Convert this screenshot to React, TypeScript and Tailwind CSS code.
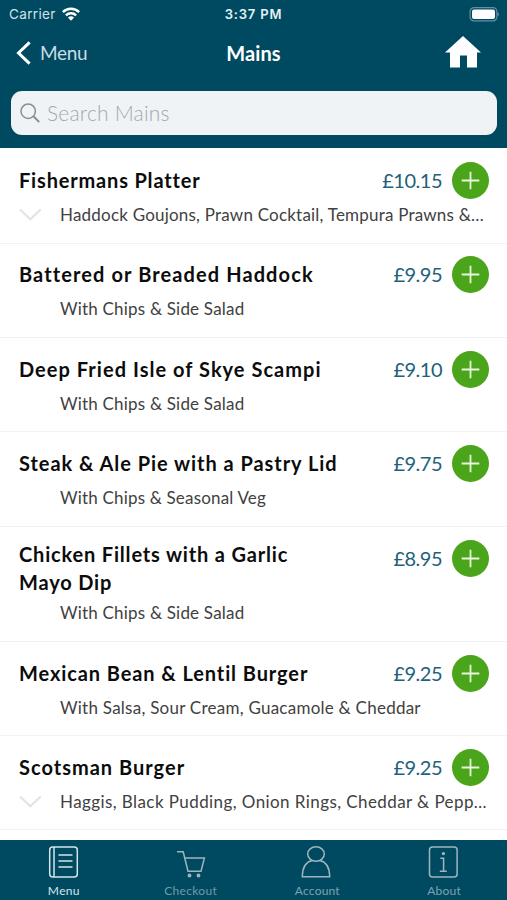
type Item = {
  name: string;
  nameClass: string;
  desc: string;
  descClass: string;
  price: string;
  height: string;
  more?: boolean;
};

const items: Item[] = [
  { name: "Fishermans Platter", nameClass: "tracking-[0.82px]", desc: "Haddock Goujons, Prawn Cocktail, Tempura Prawns &…", descClass: "tracking-[0.21px]", price: "£10.15", height: "h-[96px] pt-[14px]", more: true },
  { name: "Battered or Breaded Haddock", nameClass: "tracking-[1.1px]", desc: "With Chips & Side Salad", descClass: "tracking-[0.2px]", price: "£9.95", height: "h-[94px] pt-[12px]" },
  { name: "Deep Fried Isle of Skye Scampi", nameClass: "tracking-[1.03px]", desc: "With Chips & Side Salad", descClass: "tracking-[0.2px]", price: "£9.10", height: "h-[94px] pt-[13px]" },
  { name: "Steak & Ale Pie with a Pastry Lid", nameClass: "tracking-[0.95px]", desc: "With Chips & Seasonal Veg", descClass: "tracking-[0.18px]", price: "£9.75", height: "h-[95px] pt-[13px]" },
  { name: "Chicken Fillets with a Garlic\nMayo Dip", nameClass: "tracking-[0.82px]", desc: "With Chips & Side Salad", descClass: "tracking-[0.2px]", price: "£8.95", height: "h-[115px] pt-[13px]" },
  { name: "Mexican Bean & Lentil Burger", nameClass: "tracking-[0.9px]", desc: "With Salsa, Sour Cream, Guacamole & Cheddar", descClass: "tracking-[0.25px]", price: "£9.25", height: "h-[94px] pt-[13px]" },
  { name: "Scotsman Burger", nameClass: "tracking-[1px]", desc: "Haggis, Black Pudding, Onion Rings, Cheddar & Pepp…", descClass: "tracking-[0.42px]", price: "£9.25", height: "h-[94px] pt-[13px]", more: true },
];

function StatusBar() {
  return (
    <div className="grid h-[27px] grid-cols-3 items-center px-[9px] font-['Inter',sans-serif] text-[13px] leading-[27px]">
      <div className="flex items-center gap-[6px] text-[#d3e1e6]">
        <span className="pt-px text-[13.5px] tracking-[0.35px]">Carrier</span>
        <svg width="18" height="14" viewBox="0 0 18 14" fill="none" stroke="#fff" strokeWidth="2.5">
          <path d="M.9 5.1a11.6 11.6 0 0 1 16.2 0" />
          <path d="M3.9 8.3a7.3 7.3 0 0 1 10.2 0" />
          <path d="M9 13.8 5.9 10.6a4.5 4.5 0 0 1 6.2 0Z" fill="#fff" stroke="none" />
        </svg>
      </div>
      <span className="pt-px text-center font-semibold tracking-[0.8px] text-[#e6f1f4]">3:37 PM</span>
      <svg className="mr-[-1px] justify-self-end" width="31" height="15" viewBox="0 0 31 15">
        <g transform="translate(1.5)">
          <rect x=".6" y=".6" width="26.8" height="13.3" rx="4" fill="none" stroke="#65909f" strokeWidth="1.2" />
          <rect x="2.5" y="2.5" width="23" height="9.5" rx="2" fill="#fff" />
          <path d="M28 5v4.5q1.5-.7 1.5-2.25T28 5Z" fill="#65909f" />
        </g>
      </svg>
    </div>
  );
}

function Row({ item }: { item: Item }) {
  const two = item.name.includes("\n");
  return (
    <li className={`${item.height} shrink-0 border-b border-[#f1f2f2] pl-[19px] pr-[18px]`}>
      <div className={`${two ? "h-[62px]" : "h-[42px]"} flex items-start`}>
        <h2 className={`${item.nameClass} ${two ? "pt-0" : "pt-[4px]"} flex-1 whitespace-pre text-[20px] font-bold leading-[28px] text-[#0c0c0c]`}>{item.name}</h2>
        <span className="mr-[10px] text-[20px] leading-[36px] tracking-[-0.5px] text-[#23617a]">{item.price}</span>
        <button aria-label={`Add ${item.name}`} className="grid size-[37px] place-items-center rounded-full bg-[#4aa51b]">
          <svg width="19" height="19" viewBox="0 0 19 19" stroke="#eaf7df" strokeWidth="1.8"><path d="M9.5.7v17.6M.7 9.5h17.6" /></svg>
        </button>
      </div>
      <div className="flex h-[22px] items-center">
        <div className="w-[41px] shrink-0">
          {item.more && <svg width="23" height="14" viewBox="0 0 23 14" fill="none" stroke="#e3e3e3" strokeWidth="2.2"><path d="m1 1.5 10.3 9.8L21.7 1.5" /></svg>}
        </div>
        <p className={`${item.descClass} whitespace-nowrap text-[17px] leading-[22px] text-[#414141]`}>{item.desc}</p>
      </div>
    </li>
  );
}

const tabs = [
  {
    label: "Menu", color: "text-[#d2e6ec]", track: "tracking-[0.35px]",
    icon: <><rect x="2.7" y="1" width="27.6" height="30" rx="3" /><path d="M7 1v30M11.5 9h14M11.5 15h14M11.5 21h14" /></>,
  },
  {
    label: "Checkout", color: "text-[#7399a6]", track: "tracking-[0.3px]",
    icon: <><path d="M3 5.8h6.2l4.8 19.5h13l3.4-13.2H10.8" /><circle cx="15.5" cy="29.5" r="1.2" fill="currentColor" /><circle cx="24.5" cy="29.5" r="1.2" fill="currentColor" /></>,
  },
  {
    label: "Account", color: "text-[#7fa3af]", track: "tracking-[0.2px]",
    icon: <><ellipse cx="16" cy="8" rx="8.3" ry="7.2" /><path d="M12 14.5C5.5 16.2 2.3 22 2.3 30.8h27.4C29.7 22 26.5 16.2 20 14.5" /></>,
  },
  {
    label: "About", color: "text-[#7fa3af]", track: "tracking-[0.2px]",
    icon: <><rect x="2.5" y="1" width="27.6" height="30" rx="3" /><path d="M13.3 12.3h3.3v13M12.8 25.3h7" /><circle cx="16.4" cy="7.6" r=".9" fill="currentColor" /></>,
  },
];

export default function App() {
  return (
    <div className="flex h-[900px] w-[507px] flex-col overflow-hidden bg-white font-['Lato',sans-serif]">
      <header className="h-[148px] shrink-0 bg-[#004a61] text-white">
        <StatusBar />
        <div className="grid h-[64px] grid-cols-3 items-start pt-[8px]">
          <button className="flex h-[36px] items-center gap-[9px] pl-[16px] text-[#c9dce3]">
            <svg className="-mt-px" width="15" height="24" viewBox="0 0 15 24" fill="none" stroke="#fff" strokeWidth="3"><path d="M13.6 1.3 2.5 12l11.1 10.7" /></svg>
            <span className="pt-px text-[19px] tracking-[-0.3px]">Menu</span>
          </button>
          <h1 className="text-center text-[20px] font-bold leading-[36px] tracking-[0.1px]">Mains</h1>
          <svg className="mr-[26px] mt-px justify-self-end" width="36" height="32" viewBox="0 0 36 32" fill="#fff"><path d="M18 0 36 16.5h-4V31.5H22V19.5h-7v12H5v-15H0Z" /></svg>
        </div>
        <div className="ml-[11px] mr-[10px] flex h-[44px] items-center gap-[7px] rounded-[11px] bg-[#eff3f6] pl-[9px]">
          <svg width="20" height="20" viewBox="0 0 20 20" fill="none" stroke="#8a8e91" strokeWidth="1.5"><circle cx="8.2" cy="8.2" r="7.2" /><path d="m13.5 13.3 5.7 5.8" strokeWidth="2" /></svg>
          <span className="text-[21px] font-light tracking-[0.2px] text-[#a3a8ab]">Search Mains</span>
        </div>
      </header>
      <ul className="flex h-[692px] shrink-0 flex-col">
        {items.map((item) => <Row key={item.name} item={item} />)}
      </ul>
      <nav className="grid h-[60px] shrink-0 grid-cols-4 bg-[#004a61]">
        {tabs.map((tab) => (
          <button key={tab.label} className={`${tab.color} flex flex-col items-center pt-[6px]`}>
            <svg width="33" height="33" viewBox="0 0 33 33" fill="none" stroke={tab.label === "Menu" ? "#d2e6ec" : "#9eb5bd"} strokeWidth="1.5">{tab.icon}</svg>
            <span className={`${tab.track} mt-[3px] pl-px text-[12px] leading-[17px]`}>{tab.label}</span>
          </button>
        ))}
      </nav>
    </div>
  );
}
